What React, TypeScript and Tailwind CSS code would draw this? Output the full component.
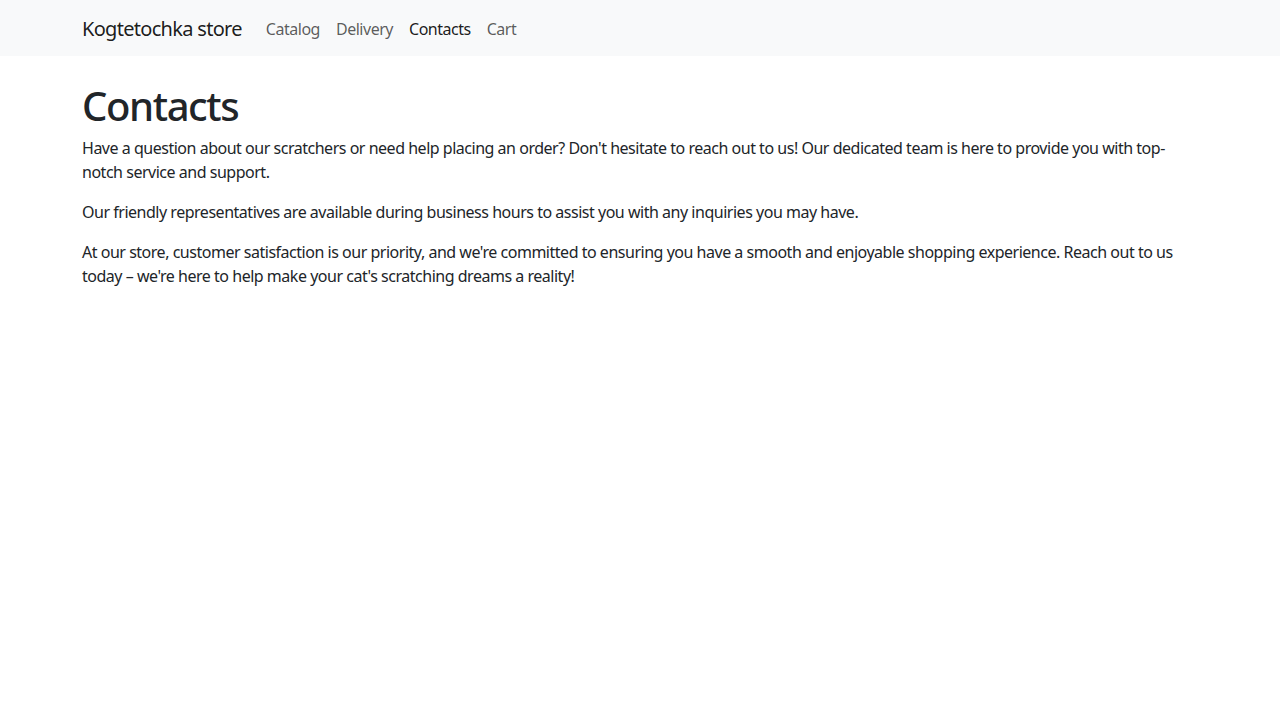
import React from 'react';

const links = [
  { label: 'Catalog', active: false },
  { label: 'Delivery', active: false },
  { label: 'Contacts', active: true },
  { label: 'Cart', active: false },
];

const App: React.FC = () => {
  return (
    <div className="min-h-screen bg-white text-[#212529] font-['Noto_Sans',sans-serif] tracking-[-0.03em]">
      {/* Navbar */}
      <nav className="bg-[#f8f9fa] py-2">
        <div className="mx-auto max-w-[1140px] px-3 flex items-center">
          <a className="text-[20px] leading-[30px] pt-[6px] pb-[4px] mr-4 tracking-[-0.035em] text-black/90">
            Kogtetochka store
          </a>
          <ul className="flex items-center">
            {links.map(link => (
              <li key={link.label}>
                <a
                  className={`block px-2 pt-[9px] pb-[7px] text-base leading-6 ${
                    link.active ? 'text-black/90' : 'text-black/65'
                  }`}
                >
                  {link.label}
                </a>
              </li>
            ))}
          </ul>
        </div>
      </nav>

      {/* Content */}
      <main className="mx-auto max-w-[1140px] px-3 mt-6">
        <h1 className="text-[40px] leading-[48px] font-medium tracking-[-0.035em] pt-[2px] mb-[6px]">Contacts</h1>
        <p className="text-base leading-6 mb-4">
          Have a question about our scratchers or need help placing an order? Don't hesitate to reach out to us! Our dedicated team is here to provide you with top-notch service and support.
        </p>
        <p className="text-base leading-6 mb-4">
          Our friendly representatives are available during business hours to assist you with any inquiries you may have.
        </p>
        <p className="text-base leading-6 mb-4">
          At our store, customer satisfaction is our priority, and we're committed to ensuring you have a smooth and enjoyable shopping experience. Reach out to us today – we're here to help make your cat's scratching dreams a reality!
        </p>
      </main>
    </div>
  );
};

export default App;
